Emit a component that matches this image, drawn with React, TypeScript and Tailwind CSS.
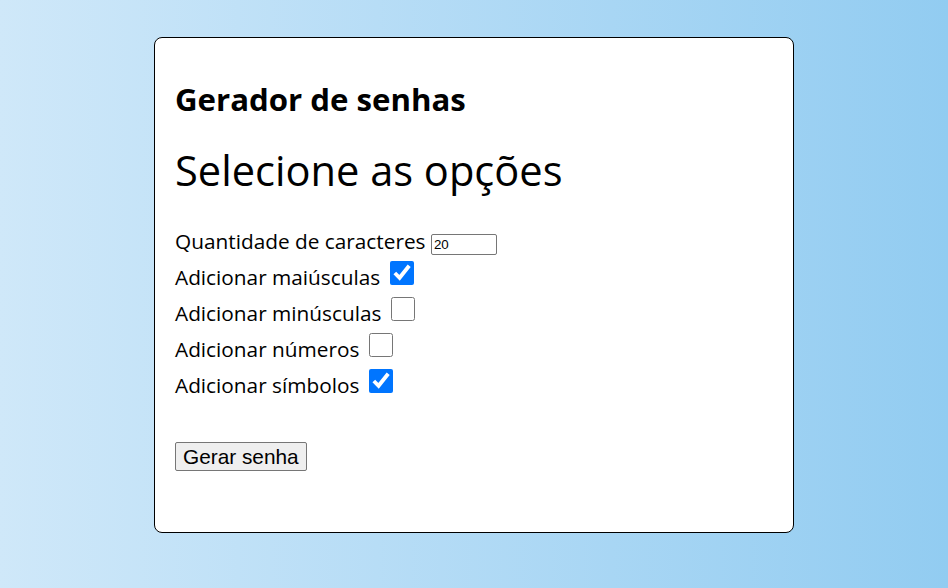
import React, { useState } from 'react';

const options = [
  { id: 'upper', label: 'Adicionar maiúsculas', checked: true },
  { id: 'lower', label: 'Adicionar minúsculas', checked: false },
  { id: 'numbers', label: 'Adicionar números', checked: false },
  { id: 'symbols', label: 'Adicionar símbolos', checked: true },
];

export default function App() {
  const [length, setLength] = useState('20');
  const [checks, setChecks] = useState<Record<string, boolean>>(
    Object.fromEntries(options.map((o) => [o.id, o.checked]))
  );

  return (
    <div className="min-h-[588px] w-full bg-gradient-to-r from-[#cfe8f9] to-[#92ccf1] pt-[37px] font-['Open_Sans',sans-serif] text-[20.8px] text-black">
      <div className="mx-auto h-[496px] w-[640px] rounded-lg border border-black bg-white px-5 pt-4">
        <h2 className="mt-[23.6px] text-[31.2px] font-bold leading-[1.362]">Gerador de senhas</h2>
        <h1 className="mt-[22.4px] text-[41.6px] font-normal leading-[1.362]">Selecione as opções</h1>

        <div className="mt-[25px] leading-[34px]">
          <div>
            Quantidade de caracteres{' '}
            <input
              type="text"
              value={length}
              onChange={(e) => setLength(e.target.value)}
              className="h-[21px] w-[66px] rounded-[2px] border border-[#767676] px-[2px] py-[1px] align-baseline font-['Liberation_Sans',Arial,sans-serif] text-[13.33px] leading-normal"
            />
          </div>
          {options.map((o) => (
            <div key={o.id}>
              {o.label}{' '}
              <input
                type="checkbox"
                checked={checks[o.id]}
                onChange={(e) => setChecks({ ...checks, [o.id]: e.target.checked })}
                className="m-[3px_3px_3px_4px] h-6 w-6 align-baseline accent-[#0075ff]"
              />
            </div>
          ))}
        </div>

        <button className="mt-[40px] rounded-[2px] border border-[#767676] bg-[#efefef] px-[7px] py-[1px] font-['Liberation_Sans',Arial,sans-serif] text-[20.8px] leading-[25px]">
          Gerar senha
        </button>
      </div>
    </div>
  );
}
